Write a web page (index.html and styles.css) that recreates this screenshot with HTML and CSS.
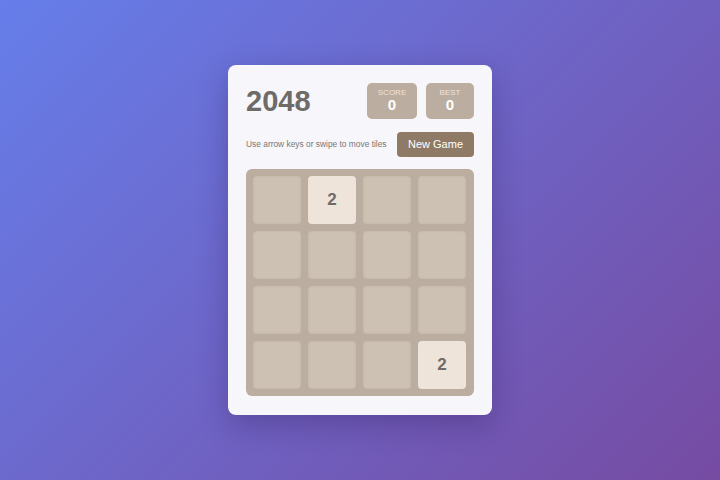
FILE: index.html
```html
<!DOCTYPE html>
<html>
<head>
<meta charset="utf-8">
<link rel="stylesheet" href="styles.css">
</head>
<body>
<div class="card">
  <div class="header">
    <h1 class="title">2048</h1>
    <div class="scores">
      <div class="score-box score"><span class="label">SCORE</span><span class="value">0</span></div>
      <div class="score-box best"><span class="label">BEST</span><span class="value">0</span></div>
    </div>
  </div>
  <div class="controls">
    <p class="hint">Use arrow keys or swipe to move tiles</p>
    <button class="new-game">New Game</button>
  </div>
  <div class="grid">
    <div class="cell"></div><div class="cell tile-2">2</div><div class="cell"></div><div class="cell"></div>
    <div class="cell"></div><div class="cell"></div><div class="cell"></div><div class="cell"></div>
    <div class="cell"></div><div class="cell"></div><div class="cell"></div><div class="cell"></div>
    <div class="cell"></div><div class="cell"></div><div class="cell"></div><div class="cell tile-2">2</div>
  </div>
</div>
</body>
</html>
```
FILE: styles.css
```css
html, body {
  margin: 0;
  padding: 0;
  height: 100%;
}
body {
  width: 720px;
  height: 480px;
  background: linear-gradient(135deg, #667eea 0%, #764ba2 100%);
  font-family: "Liberation Sans", Arial, sans-serif;
  display: flex;
  align-items: center;
  justify-content: center;
}
.card {
  width: 228px;
  padding: 18px 18px 19px;
  background: #f7f6fb;
  border-radius: 8px;
  box-shadow: 0 10px 30px rgba(40, 20, 80, 0.3);
  margin-top: -1px;
}
.header {
  display: flex;
  justify-content: space-between;
  align-items: flex-start;
  height: 36px;
}
.title {
  margin: 0;
  font-size: 29px;
  line-height: 37px;
  font-weight: bold;
  color: #6e6b68;
}
.scores {
  display: flex;
  gap: 9px;
}
.score-box {
  background: #bbada0;
  border-radius: 5px;
  height: 36px;
  display: flex;
  flex-direction: column;
  align-items: center;
  justify-content: center;
  color: #fff;
}
.score-box.score { width: 50px; }
.score-box.best { width: 48px; }
.label {
  font-size: 8px;
  line-height: 9px;
  color: #eee4da;
}
.value {
  font-size: 15px;
  line-height: 16px;
  font-weight: bold;
}
.controls {
  display: flex;
  justify-content: space-between;
  align-items: center;
  margin-top: 13px;
  height: 25px;
}
.hint {
  margin: 0;
  font-size: 8.4px;
  white-space: nowrap;
  color: #777;
}
.new-game {
  width: 77px;
  height: 25px;
  border: none;
  border-radius: 4px;
  background: #8f7a66;
  color: #fff;
  font-family: "Liberation Sans", Arial, sans-serif;
  font-size: 11px;
  padding: 0;
}
.grid {
  margin-top: 12px;
  background: #bbada0;
  border-radius: 6px;
  padding: 7px;
  display: grid;
  grid-template-columns: repeat(4, 48px);
  grid-auto-rows: 48px;
  gap: 7px;
}
.cell {
  background: #cdc1b4;
  border-radius: 4px;
  box-shadow: inset 0 0 2px rgba(150, 130, 110, 0.25);
  display: flex;
  align-items: center;
  justify-content: center;
  font-weight: bold;
  font-size: 17px;
  color: #6e6b68;
}
.tile-2 {
  background: #eee4da;
  box-shadow: none;
}
```
